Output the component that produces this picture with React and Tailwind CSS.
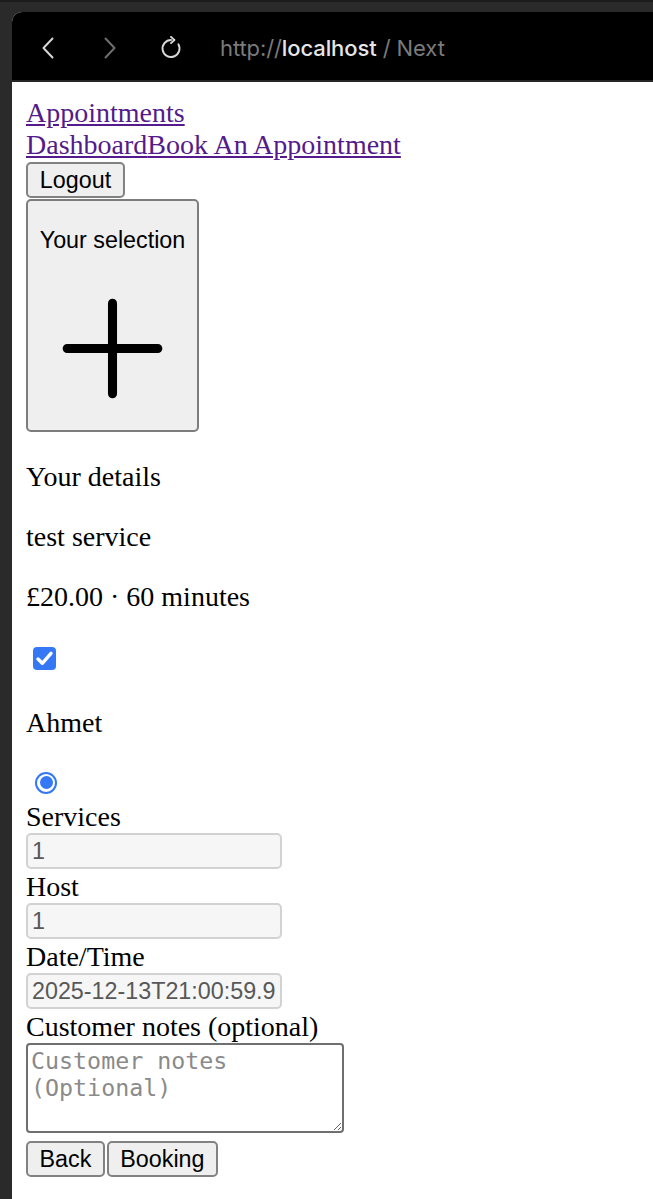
import React from "react";

function BackIcon() {
  return (
    <svg width="12" height="22" viewBox="0 0 12 22" fill="none" className="block">
      <path d="M10.5 1.5 L1.5 11 L10.5 20.5" stroke="#d6d6d6" strokeWidth="2" strokeLinecap="round" strokeLinejoin="round" />
    </svg>
  );
}

function ForwardIcon() {
  return (
    <svg width="12" height="22" viewBox="0 0 12 22" fill="none" className="block">
      <path d="M1.5 1.5 L10.5 11 L1.5 20.5" stroke="#6e6e6e" strokeWidth="2" strokeLinecap="round" strokeLinejoin="round" />
    </svg>
  );
}

function ReloadIcon() {
  return (
    <svg width="22" height="23" viewBox="0 0 22 23" fill="none" className="block">
      <path d="M11 4 A8.5 8.5 0 1 0 18.4 8.3" stroke="#d8d8d8" strokeWidth="1.9" strokeLinecap="round" />
      <path d="M11 0.9 L14.4 4 L11 7.1" stroke="#d8d8d8" strokeWidth="1.9" strokeLinecap="round" strokeLinejoin="round" />
    </svg>
  );
}

function PlusIcon() {
  return (
    <svg width="145" height="145" viewBox="0 0 24 24" fill="none" className="block">
      <path d="M12 4.5v15m7.5-7.5h-15" stroke="#000" strokeWidth="1.5" strokeLinecap="round" strokeLinejoin="round" />
    </svg>
  );
}

function CheckBox() {
  return (
    <div className="w-[23px] h-[23px] rounded-[4px] bg-[#3478f6] flex items-center justify-center">
      <svg width="23" height="23" viewBox="0 0 23 23" fill="none" className="block">
        <path d="M5 12 L9.3 16.3 L18 6.3" stroke="#fff" strokeWidth="3.4" strokeLinecap="round" strokeLinejoin="round" />
      </svg>
    </div>
  );
}

function Radio() {
  return (
    <div className="w-[22px] h-[22px] rounded-full border-2 border-[#3478f6] bg-white flex items-center justify-center">
      <div className="w-[13px] h-[13px] rounded-full bg-[#3478f6]" />
    </div>
  );
}

const btn =
  "h-[36px] px-[11.5px] border-2 border-[#828282] rounded-[5px] bg-[#efefef] text-black font-['Liberation_Sans',Arial,sans-serif] text-[23.3px] leading-[26px]";

const field =
  "h-[36px] w-[256px] border-2 border-[#d2d2d2] rounded-[5px] bg-[#f6f6f6] pl-[4px] pr-[4px] text-[#585858] font-['Liberation_Sans',Arial,sans-serif] text-[23.3px] leading-[28px] outline-none";

export default function App() {
  return (
    <div className="w-[653px] h-[1199px] overflow-hidden bg-[#2a2a2a] border-t-2 border-[#1c1c1c] pt-[10px] pl-[12px] flex flex-col">
      <div className="flex-1 rounded-tl-[10px] overflow-hidden bg-white flex flex-col">
        {/* toolbar */}
        <div className="h-[68px] bg-black flex items-center shrink-0">
          <div className="ml-[30px] mt-[3px]">
            <BackIcon />
          </div>
          <div className="ml-[50px] mt-[3px]">
            <ForwardIcon />
          </div>
          <div className="ml-[44px] mt-[2px]">
            <ReloadIcon />
          </div>
          <div className="ml-[38px] mt-[3px] font-['Inter',sans-serif] text-[22px] leading-[28px] tracking-[-0.1px] text-[#7b7b7b] whitespace-nowrap">
            http://<span className="text-[#e6e6e6] font-medium">localhost</span> / Next
          </div>
        </div>
        <div className="h-[2px] bg-[#262626] shrink-0" />

        {/* page */}
        <div className="flex-1 pl-[14px] pt-[15px] font-['Liberation_Serif','Times_New_Roman',serif] text-[28px] leading-[32px] text-black">
          <div className="h-[32px]">
            <a href="#" className="text-[#551a8b] underline">Appointments</a>
          </div>
          <div className="h-[32px]">
            <a href="#" className="text-[#551a8b] underline">Dashboard</a>
            <a href="#" className="text-[#551a8b] underline">Book An Appointment</a>
          </div>
          <div className="h-[38px] pt-[1px]">
            <button className={btn + " h-[35px] w-[99px] px-0"}>Logout</button>
          </div>

          <button className="w-[173px] h-[233px] border-2 border-[#7d7d7d] rounded-[5px] bg-[#efefef] flex flex-col items-center pt-[26px] font-['Liberation_Sans',Arial,sans-serif] text-[23.3px] leading-[27px] text-black">
            <span>Your selection</span>
            <span className="mt-[22px]">
              <PlusIcon />
            </span>
          </button>

          <p className="mt-[29px]">Your details</p>
          <p className="mt-[28px]">test service</p>
          <p className="mt-[28px]">£20.00 · 60 minutes</p>

          <div className="mt-[28px] h-[38px] pt-[6px] pl-[7px]">
            <CheckBox />
          </div>

          <p className="mt-[28px]">Ahmet</p>

          <div className="mt-[28px] h-[34px] pt-[4.5px] pl-[9px]">
            <Radio />
          </div>

          <div className="h-[32px]">Services</div>
          <div className="h-[38px]">
            <input className={field} value="1" readOnly />
          </div>
          <div className="h-[32px]">Host</div>
          <div className="h-[38px]">
            <input className={field} value="1" readOnly />
          </div>
          <div className="h-[32px]">Date/Time</div>
          <div className="h-[38px]">
            <input className={field} value="2025-12-13T21:00:59.914Z" readOnly />
          </div>
          <div className="h-[32px]">Customer notes (optional)</div>
          <div className="h-[98px]">
            <textarea
              className="block w-[318px] h-[90px] border-2 border-[#6f6f6f] rounded-[4px] px-[3px] pt-[2px] font-['DejaVu_Sans_Mono',monospace] text-[23.3px] leading-[27px] text-black placeholder:text-[#8a8a8a] outline-none"
              placeholder="Customer notes (Optional)"
            />
          </div>
          <div className="flex h-[36px]">
            <button className={btn}>Back</button>
            <button className={btn + " ml-[2px]"}>Booking</button>
          </div>
        </div>
      </div>
    </div>
  );
}
